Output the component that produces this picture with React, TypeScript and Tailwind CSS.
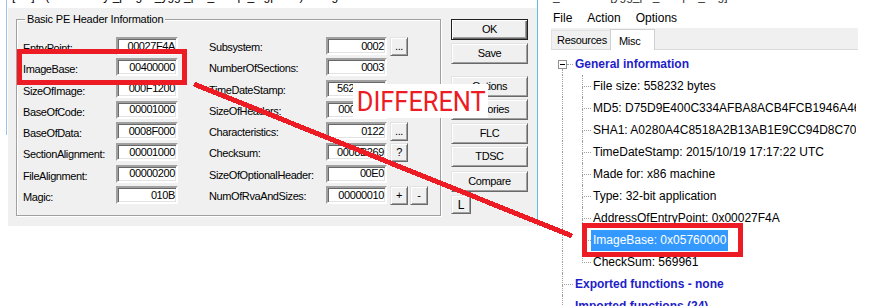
import React from "react";

const leftRows: [string, string][] = [
  ["EntryPoint:", "00027F4A"],
  ["ImageBase:", "00400000"],
  ["SizeOfImage:", "000F1200"],
  ["BaseOfCode:", "00001000"],
  ["BaseOfData:", "0008F000"],
  ["SectionAlignment:", "00001000"],
  ["FileAlignment:", "00000200"],
  ["Magic:", "010B"],
];

const rightRows: [string, string, string[]][] = [
  ["Subsystem:", "0002", ["..."]],
  ["NumberOfSections:", "0003", []],
  ["TimeDateStamp:", "562525A2", []],
  ["SizeOfHeaders:", "00000400", []],
  ["Characteristics:", "0122", ["..."]],
  ["Checksum:", "0008B269", ["?"]],
  ["SizeOfOptionalHeader:", "00E0", []],
  ["NumOfRvaAndSizes:", "00000010", ["+", "-"]],
];

const details = [
  "File size: 558232 bytes",
  "MD5: D75D9E400C334AFBA8ACB4FCB1946A46",
  "SHA1: A0280A4C8518A2B13AB1E9CC94D8C70E1F3B2A6D",
  "TimeDateStamp: 2015/10/19 17:17:22 UTC",
  "Made for: x86 machine",
  "Type: 32-bit application",
  "AddressOfEntryPoint: 0x00027F4A",
  "ImageBase: 0x05760000",
  "CheckSum: 569961",
];

function Field({ value, wide }: { value: string; wide?: boolean }) {
  return (
    <div
      className={`${wide ? "w-[62px]" : "w-[61px]"} h-[18px] shrink-0 border-2 border-t-[#a0a0a0] border-l-[#a0a0a0] border-r-white border-b-white bg-white shadow-[inset_1px_1px_0_#696969,inset_-1px_-1px_0_#e3e3e3] flex items-center justify-end pr-[1px] text-[11px] leading-none`}
    >
      {value}
    </div>
  );
}

function SmallButton({ label }: { label: string }) {
  return (
    <div className="w-[18px] h-[19px] shrink-0 flex items-center justify-center border border-t-[#e3e3e3] border-l-[#e3e3e3] border-r-[#696969] border-b-[#696969] bg-[#f0f0f0] shadow-[inset_1px_1px_0_#fff,inset_-1px_-1px_0_#a0a0a0] text-[11px] leading-none">
      {label}
    </div>
  );
}

function WinButton({ label, mt, isDefault }: { label: string; mt: string; isDefault?: boolean }) {
  return (
    <div
      className={`${mt} w-[77px] h-[21px] flex items-center justify-center border bg-[#f0f0f0] text-[11px] leading-none ${
        isDefault
          ? "border-[#202020] shadow-[inset_1px_1px_0_#fff,inset_-1px_-1px_0_#696969,inset_-2px_-2px_0_#a0a0a0]"
          : "border-t-[#e3e3e3] border-l-[#e3e3e3] border-r-[#696969] border-b-[#696969] shadow-[inset_1px_1px_0_#fff,inset_-1px_-1px_0_#a0a0a0]"
      }`}
    >
      {label}
    </div>
  );
}

function Gutter({ w, up = true, down = true, branch = true }: { w: string; up?: boolean; down?: boolean; branch?: boolean }) {
  return (
    <div className={`${w} shrink-0 flex flex-col`}>
      <div
        className={`flex-1 border-dotted border-[#a0a0a0] ${up ? "border-l" : ""} ${branch ? "border-b" : ""}`}
      />
      <div className={`flex-1 border-dotted border-[#a0a0a0] ${down ? "border-l" : ""}`} />
    </div>
  );
}

function PeDialog() {
  return (
    <div className="w-[529px] h-[218px] bg-[#f0f0f0] flex pl-[8px] pt-[11px] tracking-[-0.4px]">
      <div className="relative w-[425px] h-[197px] shrink-0 border border-[#a0a0a0] shadow-[1px_1px_0_#fff,inset_1px_1px_0_#fff]">
        <div className="absolute -top-[8px] left-[8px] px-[2px] bg-[#f0f0f0] text-[11px] leading-[14px] tracking-[-0.2px]">
          Basic PE Header Information
        </div>
        <div className="flex flex-col gap-[3.3px] pt-[17px] pl-[6px] text-[11px]">
          {leftRows.map(([label, value], i) => {
            const [rLabel, rValue, btns] = rightRows[i];
            return (
              <div key={label} className="flex h-[18px] items-center">
                <div className="w-[93px] shrink-0 pt-[5px] leading-none">{label}</div>
                <Field value={value} wide />
                <div className="w-[31px] shrink-0" />
                <div className="w-[117px] shrink-0 pt-[3px] leading-none">{rLabel}</div>
                <Field value={rValue} />
                <div className="flex gap-[2px] ml-[3px]">
                  {btns.map((b) => (
                    <SmallButton key={b} label={b} />
                  ))}
                </div>
              </div>
            );
          })}
        </div>
      </div>
      <div className="ml-[10px] flex flex-col">
        <WinButton label="OK" mt="mt-0" isDefault />
        <WinButton label="Save" mt="mt-[3px]" />
        <WinButton label="Options" mt="mt-[12px]" />
        <WinButton label="Histories" mt="mt-[2px]" />
        <WinButton label="FLC" mt="mt-[3px]" />
        <WinButton label="TDSC" mt="mt-[2px]" />
        <WinButton label="Compare" mt="mt-[4px]" />
        <div className="mt-[3px] w-[20px] h-[19px] flex items-center justify-center border border-t-[#e3e3e3] border-l-[#e3e3e3] border-r-[#696969] border-b-[#696969] shadow-[inset_1px_1px_0_#fff,inset_-1px_-1px_0_#a0a0a0] text-[12px] leading-none">
          L
        </div>
      </div>
    </div>
  );
}

function InfoTree() {
  return (
    <div className="w-[305px] overflow-hidden pt-[3px] text-[12px] whitespace-nowrap">
      <div className="flex h-[22px]">
        <div className="w-[7px] shrink-0" />
        <div className="w-[9px] shrink-0 flex flex-col">
          <div className="flex-1" />
          <div className="w-[9px] h-[9px] border border-[#919191] bg-white flex items-center justify-center">
            <div className="w-[5px] h-px bg-black" />
          </div>
          <div className="flex-1 ml-[4px] border-l border-dotted border-[#a0a0a0]" />
        </div>
        <Gutter w="w-[6px]" up={false} down={false} />
        <span className="self-center px-[2px] font-bold text-[#1e1ec8]">General information</span>
      </div>
      {details.map((t, i) => {
        const selected = t.startsWith("ImageBase");
        const last = i === details.length - 1;
        return (
          <div key={t} className="flex h-[22px]">
            <div className="w-[11px] shrink-0" />
            <Gutter w="w-[20px]" branch={false} />
            <Gutter w="w-[9px]" down={!last} />
            <span
              className={`self-center px-[2px] leading-[21px] ${selected ? "bg-[#3399ff] text-white" : "text-black"}`}
            >
              {t}
            </span>
          </div>
        );
      })}
      {["Exported functions - none", "Imported functions (24)"].map((t) => (
        <div key={t} className="flex h-[22px]">
          <div className="w-[11px] shrink-0" />
          <Gutter w="w-[11px]" />
          <span className="self-center px-[2px] font-bold text-[#1e1ec8]">{t}</span>
        </div>
      ))}
    </div>
  );
}

export default function App() {
  return (
    <div className="relative w-[876px] h-[306px] overflow-hidden bg-white font-['Liberation_Sans',Arial,sans-serif] text-black">
      <div className="flex">
        {/* left: PE header dialog */}
        <div className="w-[543px] shrink-0 flex">
          <div className="w-[6px] shrink-0" />
          <div className="w-px h-[135px] shrink-0 bg-[#9cc3e8]" />
          <div className="w-px shrink-0" />
          <div className="flex flex-col">
            <div className="h-[8px] overflow-hidden">
              <div className="-mt-[10px] pl-[4px] text-[12px] leading-[12px] whitespace-nowrap">
                [PE] - (d:\tools\olly\_plugin\_ygg\_pe\_dump\_tsgp.exe) - Plugin
              </div>
            </div>
            <PeDialog />
          </div>
          <div className="w-px h-[226px] shrink-0 bg-[#5fc0d8]" />
        </div>

        {/* right: file info viewer */}
        <div className="w-[333px] shrink-0 flex flex-col">
          <div className="h-[8px] overflow-hidden">
            <div className="-mt-[10px] pl-[10px] text-[12px] leading-[12px] whitespace-nowrap text-[#333]">
              _ Viewer - [ygg_pe_sample_img] - Info
            </div>
          </div>
          <div className="h-[20px] flex items-center gap-[15px] pl-[10px] text-[12px]">
            <span>File</span>
            <span>Action</span>
            <span>Options</span>
          </div>
          <div className="ml-[8px] w-[307px]">
            <div className="h-[22px] bg-[#f0f0f0] flex items-end border-b border-[#dadada] text-[11px] tracking-[-0.3px]">
              <div className="w-[59px] h-[19px] flex items-center pl-[5px] border-t border-l border-[#e2e2e2]">
                Resources
              </div>
              <div className="w-[45px] h-[21px] -mb-px bg-white border border-b-0 border-[#d0d0d0] flex items-start pt-[3px] pl-[8px]">
                Misc
              </div>
            </div>
            <InfoTree />
          </div>
        </div>
      </div>

      {/* annotations */}
      <svg className="absolute inset-0 pointer-events-none" width="876" height="306">
        <line x1="194" y1="84" x2="572" y2="236" stroke="#ed1c24" strokeWidth="5" shapeRendering="crispEdges" />
      </svg>
      <div className="absolute left-[17px] top-[49px] w-[170px] h-[36px] border-[5px] border-[#ed1c24]" />
      <div className="absolute left-[582px] top-[223px] w-[161px] h-[34px] border-[5px] border-[#ed1c24]" />
      <div className="absolute left-[353px] top-[84px] w-[135px] h-[34px] bg-white overflow-hidden">
        <div className="pl-[4px] pt-[2px] font-['Roboto',sans-serif] text-[27px] leading-[32px] text-[#ed1c24] scale-x-[0.94] origin-left whitespace-nowrap">
          DIFFERENT
        </div>
      </div>
    </div>
  );
}
